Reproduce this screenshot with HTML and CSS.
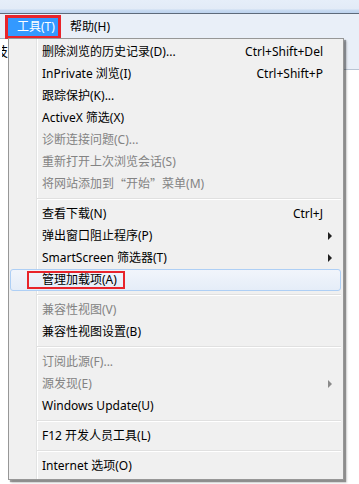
FILE: index.html
```html
<!DOCTYPE html>
<html>
<head>
<meta charset="utf-8">
<link rel="stylesheet" href="styles.css">
</head>
<body>
<div class="window">
  <div class="titlebar"></div>
  <div class="menubar">
    <span class="mb-mark"><span class="mb-item active">工具(T)</span></span>
    <span class="mb-item">帮助(H)</span>
  </div>
  <div class="stage">
    <div class="side-left"><span class="cut">技</span></div>
    <div class="menu">
      <div class="item"><span class="label">删除浏览的历史记录(D)...</span><span class="key">Ctrl+Shift+Del</span><span class="arrow-cell"></span></div>
      <div class="item"><span class="label">InPrivate 浏览(I)</span><span class="key">Ctrl+Shift+P</span><span class="arrow-cell"></span></div>
      <div class="item"><span class="label">跟踪保护(K)...</span><span class="arrow-cell"></span></div>
      <div class="item"><span class="label">ActiveX 筛选(X)</span><span class="arrow-cell"></span></div>
      <div class="item disabled"><span class="label">诊断连接问题(C)...</span><span class="arrow-cell"></span></div>
      <div class="item disabled"><span class="label">重新打开上次浏览会话(S)</span><span class="arrow-cell"></span></div>
      <div class="item disabled"><span class="label">将网站添加到<span class="q ql">“</span>开始<span class="q qr">”</span>菜单(M)</span><span class="arrow-cell"></span></div>
      <div class="sep"></div>
      <div class="item"><span class="label">查看下载(N)</span><span class="key">Ctrl+J</span><span class="arrow-cell"></span></div>
      <div class="item"><span class="label">弹出窗口阻止程序(P)</span><span class="arrow-cell"><span class="arrow"></span></span></div>
      <div class="item"><span class="label">SmartScreen 筛选器(T)</span><span class="arrow-cell"><span class="arrow"></span></span></div>
      <div class="item hover"><span class="label"><span class="mark">管理加载项(A)</span></span><span class="arrow-cell"></span></div>
      <div class="sep"></div>
      <div class="item disabled"><span class="label">兼容性视图(V)</span><span class="arrow-cell"></span></div>
      <div class="item"><span class="label">兼容性视图设置(B)</span><span class="arrow-cell"></span></div>
      <div class="sep"></div>
      <div class="item disabled"><span class="label">订阅此源(F)...</span><span class="arrow-cell"></span></div>
      <div class="item disabled"><span class="label">源发现(E)</span><span class="arrow-cell"><span class="arrow"></span></span></div>
      <div class="item"><span class="label">Windows Update(U)</span><span class="arrow-cell"></span></div>
      <div class="sep"></div>
      <div class="item"><span class="label">F12 开发人员工具(L)</span><span class="arrow-cell"></span></div>
      <div class="sep"></div>
      <div class="item"><span class="label">Internet 选项(O)</span><span class="arrow-cell"></span></div>
    </div>
    <div class="side-right"><div class="cmdbar"></div></div>
  </div>
</div>
</body>
</html>
```
FILE: styles.css
```css
html, body {
  margin: 0;
  padding: 0;
}
body {
  width: 359px;
  height: 484px;
  overflow: hidden;
  background: #ffffff;
  font-family: "Noto Sans", "Noto Sans CJK SC", sans-serif;
  font-size: 12px;
  color: #000;
}
.window {
  display: flex;
  flex-direction: column;
  height: 484px;
}
.titlebar {
  height: 13px;
  background: linear-gradient(to bottom, #e6eef9 0, #e2ebf7 9px, #c9dbf1 10px, #bcd2ee 13px);
  border-bottom: 1px solid #5d6a7a;
  flex: none;
}
.menubar {
  height: 24px;
  flex: none;
  background: #e9eff8;
  display: flex;
  align-items: flex-start;
  padding-left: 5px;
  position: relative;
  z-index: 2;
}
.mb-mark {
  margin-top: 1px;
  border: 3px solid #e8242b;
  display: flex;
  height: 18px;
}
.mb-item {
  line-height: 18px;
  height: 18px;
  white-space: nowrap;
}
.mb-item.active {
  background: #3399ff;
  color: #fff;
  width: 50px;
  box-sizing: border-box;
  padding-left: 9px;
}
.mb-mark + .mb-item {
  margin-left: 9px;
  margin-top: 4px;
}
.stage {
  flex: 1;
  display: flex;
  align-items: flex-start;
  min-height: 0;
}
.side-left {
  width: 8px;
  flex: none;
  align-self: stretch;
  border-top: 1px solid #a9b3c0;
  display: flex;
  justify-content: flex-end;
  padding-top: 5px;
  box-sizing: border-box;
  overflow: hidden;
}
.cut {
  font-size: 13px;
  line-height: 14px;
  height: 14px;
  width: 6px;
  overflow: hidden;
  direction: rtl;
  white-space: nowrap;
  font-family: "Noto Sans CJK SC", sans-serif;
}
.side-right {
  flex: 1;
  align-self: stretch;
}
.cmdbar {
  height: 31px;
  background: #e9eff8;
  border-bottom: 1px solid #b9c4d3;
}
.menu {
  width: 336px;
  flex: none;
  box-sizing: border-box;
  border: 1px solid #979797;
  padding: 2px 0;
  background:
    linear-gradient(to right, transparent 27px, #e2e3e3 27px, #e2e3e3 28px, #ffffff 28px, #ffffff 29px, transparent 29px),
    #f0f0f0;
  box-shadow: 2px 2px 1px rgba(0,0,0,0.35), 3px 3px 2px rgba(0,0,0,0.15);
  position: relative;
  z-index: 3;
}
.item {
  height: 22px;
  line-height: 22px;
  display: flex;
  align-items: center;
  margin: 0 2px 0 1px;
  padding-left: 32px;
  box-sizing: border-box;
  white-space: nowrap;
}
.item.disabled {
  color: #838383;
}
.item.hover {
  border: 1px solid #aecff5;
  border-radius: 3px;
  background: linear-gradient(to bottom, #f1f5fb, #e5edf8);
  padding-left: 31px;
}
.label {
  flex: 1;
  display: flex;
  align-items: center;
}
.q {
  display: inline-block;
  width: 12px;
  font-family: "Noto Sans CJK SC", sans-serif;
}
.ql {
  text-align: right;
}
.qr {
  text-align: left;
}
.key {
  flex: none;
}
.arrow-cell {
  width: 18px;
  flex: none;
  display: flex;
  align-items: center;
}
.arrow {
  margin-left: 5px;
  width: 0;
  height: 0;
  border-left: 4px solid #202020;
  border-top: 4px solid transparent;
  border-bottom: 4px solid transparent;
}
.disabled .arrow {
  border-left-color: #8a8a8a;
}
.mark {
  border: 2px solid #e8242b;
  height: 18px;
  line-height: 18px;
  box-sizing: border-box;
  display: flex;
  align-items: center;
  margin-left: -15px;
  padding: 0 6px 0 13px;
}
.sep {
  height: 8px;
  box-sizing: border-box;
  margin: 0 2px 0 28px;
  padding-top: 3px;
}
.sep::before {
  content: "";
  display: block;
  height: 1px;
  background: #e0e0e0;
  border-bottom: 1px solid #ffffff;
}
```
